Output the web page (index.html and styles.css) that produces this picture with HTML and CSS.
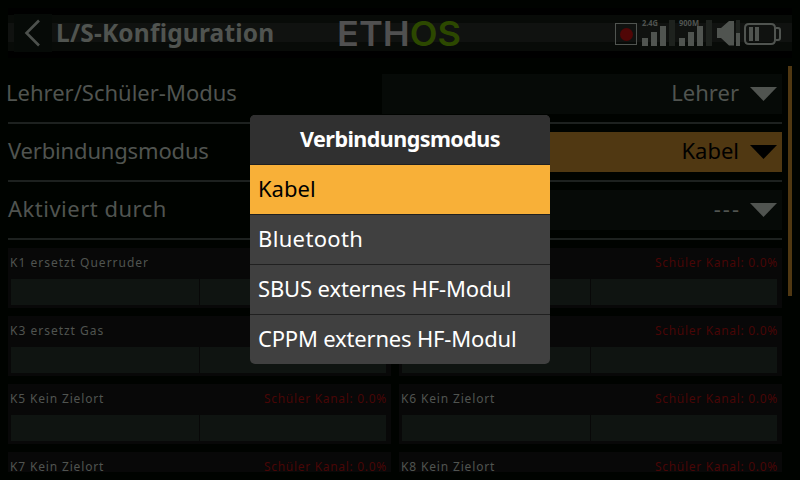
FILE: index.html
```
<!DOCTYPE html>
<html lang="de">
<head>
<meta charset="utf-8">
<title>L/S-Konfiguration</title>
<link rel="stylesheet" href="styles.css">
</head>
<body>
<header class="topbar">
  <div class="back"><svg width="38" height="38" viewBox="0 0 38 38"><path d="M25 6.500L12.500 19L25 31.500" fill="none" stroke="#4d514d" stroke-width="2.600"/></svg></div>
  <h1 class="title">L/S-Konfiguration</h1>
  <svg class="logo" width="128" height="36" viewBox="0 0 128 36"><text x="0" y="27" textLength="124" lengthAdjust="spacingAndGlyphs"><tspan fill="#505050">ETH</tspan><tspan fill="#2c4800">OS</tspan></text></svg>
  <svg class="status" width="170" height="34" viewBox="614 17 170 34">
    <rect x="615.500" y="23.500" width="21" height="21" fill="none" stroke="#505450"/>
    <circle cx="626.500" cy="34.500" r="6.500" fill="#500606"/>
    <g fill="#505450">
      <text x="642" y="26.300" textLength="16" lengthAdjust="spacingAndGlyphs">2.4G</text>
      <path d="M642 38h6v8h-6zM651 32h6v14h-6zM660 26h6v20h-6z"/>
      <text x="679" y="26.300" textLength="20" lengthAdjust="spacingAndGlyphs">900M</text>
      <path d="M679 38h6v8h-6zM688 32h6v14h-6zM697 26h6v20h-6z"/>
      <path d="M717 28h4L729 21h5v24.500h-5L721 38h-4zM736 33h4v13h-4zM749 27h4v14h-4zM755 27h4v14h-4z"/>
    </g>
    <path d="M669 20h6v26h-6zM706 20h6v26h-6zM736 20h4v13h-4z" fill="#1e221e"/>
    <path d="M749 24h22q4 0 4 4v12q0 4-4 4h-22q-4 0-4-4v-12q0-4 4-4zM776 28h2q2 0 2 2v8q0 2-2 2h-2" fill="none" stroke="#505450" stroke-width="2"/>
  </svg>
</header>
<main class="content">
  <section class="form">
    <div class="row"><span class="label l1">Lehrer/Schüler-Modus</span><div class="field"><span>Lehrer</span><i class="arrow"></i></div></div>
    <div class="row"><span class="label l2">Verbindungsmodus</span><div class="field active"><span>Kabel</span><i class="arrow"></i></div></div>
    <div class="row"><span class="label l3">Aktiviert durch</span><div class="field"><span class="none">---</span><i class="arrow"></i></div></div>
    <div class="cards">
      <div class="card"><p><span class="wide">K1 ersetzt Querruder</span></p><div class="bar"><i></i><i></i></div></div>
      <div class="card"><p><span></span><b>Schüler Kanal: 0.0%</b></p><div class="bar"><i></i><i></i></div></div>
      <div class="card"><p><span class="wide">K3 ersetzt Gas</span></p><div class="bar"><i></i><i></i></div></div>
      <div class="card"><p><span></span><b>Schüler Kanal: 0.0%</b></p><div class="bar"><i></i><i></i></div></div>
      <div class="card"><p><span>K5 Kein Zielort</span><b>Schüler Kanal: 0.0%</b></p><div class="bar"><i></i><i></i></div></div>
      <div class="card"><p><span>K6 Kein Zielort</span><b>Schüler Kanal: 0.0%</b></p><div class="bar"><i></i><i></i></div></div>
      <div class="card"><p><span>K7 Kein Zielort</span><b>Schüler Kanal: 0.0%</b></p></div>
      <div class="card"><p><span>K8 Kein Zielort</span><b>Schüler Kanal: 0.0%</b></p></div>
    </div>
  </section>
  <div class="scroll"></div>
</main>
<div class="menu" role="dialog">
  <h2><span>Verbindungsmodus</span></h2>
  <ul>
    <li class="selected">Kabel</li>
    <li class="m2">Bluetooth</li>
    <li class="m3">SBUS externes HF-Modul</li>
    <li class="m4">CPPM externes HF-Modul</li>
  </ul>
</div>
</body>
</html>
```
FILE: styles.css
```
* { box-sizing: border-box; margin: 0; padding: 0; }
body { width: 800px; height: 480px; overflow: hidden; background: #000300; color: #505450; font: 22px "Noto Sans", sans-serif; }
.topbar { display: flex; align-items: flex-start; height: 50px; margin: 8px 8px 0; padding-left: 6px;
  background: linear-gradient(#000 0 7px, #080b08 7px 15px, #101210 15px 34px, #080b08 34px 43px, #000 43px); }
.back { width: 38px; height: 38px; margin-top: 6px; background: #060a07; }
.back svg { display: block; }
.title { width: 279px; padding-left: 4px; font-size: 24.500px; font-weight: 700; line-height: 50px; letter-spacing: .18px; white-space: nowrap; }
.logo { margin: 11px 149px 0 6px; flex: none; overflow: visible; font: 600 34px Inter, sans-serif; }
.status { flex: none; margin-top: 9px; font: 700 8px "Noto Sans", sans-serif; }
.content { display: flex; justify-content: space-between; height: 406px; margin: 8px 8px 0 0; padding-left: 8px; overflow: hidden; }
.form { width: 774px; }
.row { display: flex; align-items: center; justify-content: space-between; height: 58px; border-bottom: 2px solid #1d211f; }
.label { padding-bottom: 4px; white-space: nowrap; }
.l1 { margin-left: -2px; }
.l2 { letter-spacing: -.17px; }
.l3 { letter-spacing: .5px; }
.field { display: flex; align-items: center; justify-content: flex-end; gap: 11px; width: 400px; height: 40px; padding-right: 5px; background: #060a07; }
.field span { padding-bottom: 4px; }
.field .none { letter-spacing: 2px; margin-right: -2px; }
.field.active { background: #503812; color: #000; }
.arrow { width: 27px; height: 14px; background: currentColor; clip-path: polygon(0 0, 100% 0, 50% 100%); }
.cards { display: grid; grid-template-columns: 1fr 1fr; grid-auto-rows: 60px; gap: 8px; padding-top: 8px; }
.card { padding: 0 5px 3px 3px; background: #080808; }
.card p { display: flex; justify-content: space-between; height: 31px; margin-left: -1px; line-height: 30px; font-size: 12px; letter-spacing: .84px; }
.card p span, .card b { white-space: nowrap; }
.card p .wide { letter-spacing: 1px; }
.card b { color: #480606; font-weight: 400; letter-spacing: .7px; margin-right: -1px; }
.bar { display: flex; gap: 1px; height: 26px; }
.bar i { width: 188px; background: #0f1411; }
.bar i + i { width: 186px; }
.scroll { width: 4px; height: 230px; background: #503812; }
.menu { position: absolute; left: 250px; top: 115px; width: 300px; height: 249px; border-radius: 5px; overflow: hidden; background: #404040; color: #fff; }
.menu h2 { height: 49px; background: #303030; font-size: 21.500px; line-height: 47px; letter-spacing: -.55px; text-align: center; }
.menu ul { list-style: none; }
.menu li { height: 50px; padding-left: 8px; border-top: 1px solid #202020; line-height: 47px; white-space: nowrap; }
.menu .selected { background: #f8b038; color: #000; }
.m2 { letter-spacing: .35px; }
.m3 { letter-spacing: -.14px; }
.m4 { letter-spacing: -.18px; }
```
